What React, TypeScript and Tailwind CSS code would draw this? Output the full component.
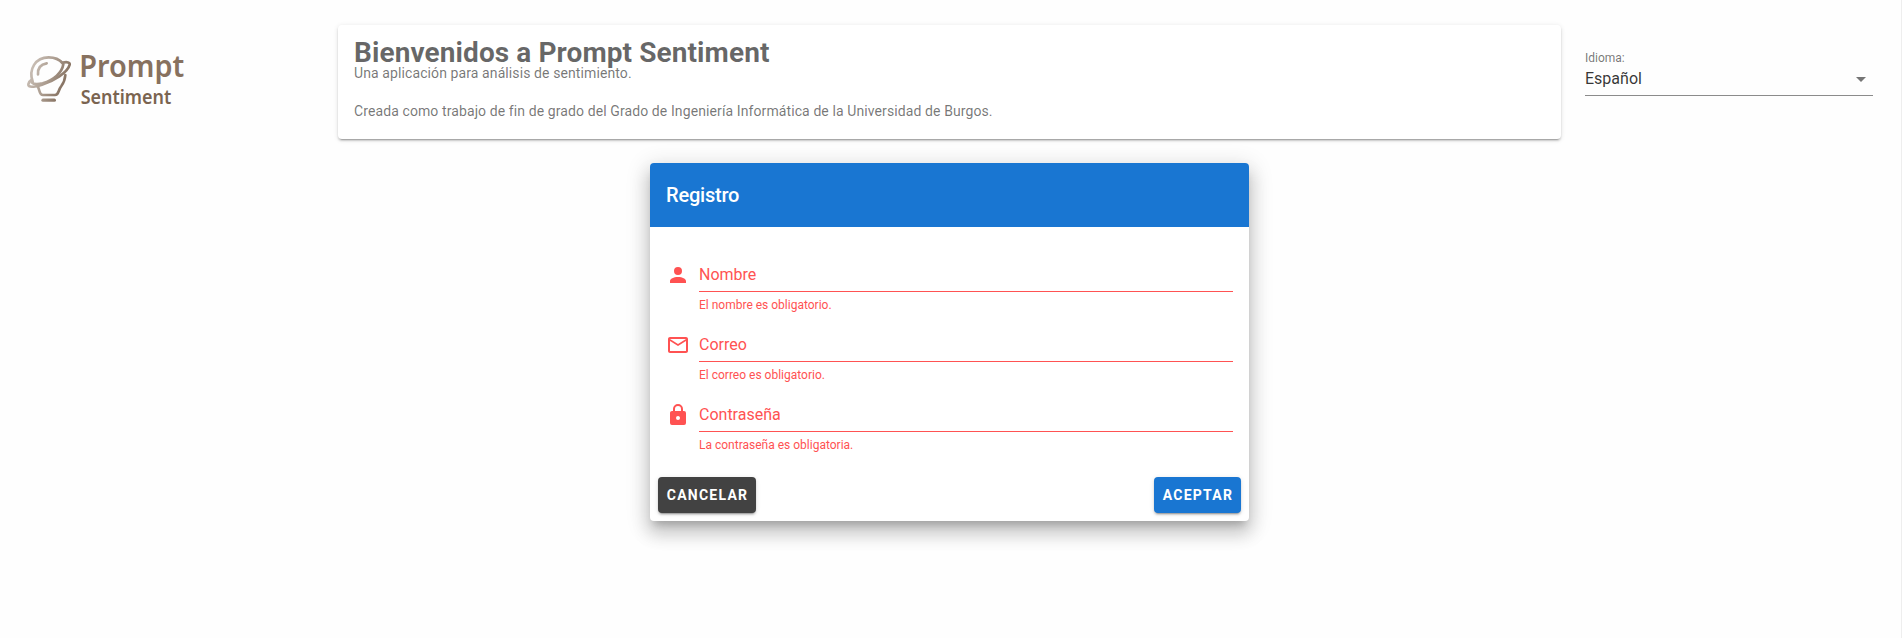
import React from "react";

const icons = {
  user: "M12,4A4,4 0 0,1 16,8A4,4 0 0,1 12,12A4,4 0 0,1 8,8A4,4 0 0,1 12,4M12,14C16.42,14 20,15.79 20,18V20H4V18C4,15.79 7.58,14 12,14Z",
  mail: "M22 6C22 4.9 21.1 4 20 4H4C2.9 4 2 4.9 2 6V18C2 19.1 2.9 20 4 20H20C21.1 20 22 19.1 22 18V6M20 6L12 11L4 6H20M20 18H4V8L12 13L20 8V18Z",
  lock: "M12,17A2,2 0 0,0 14,15C14,13.89 13.1,13 12,13A2,2 0 0,0 10,15A2,2 0 0,0 12,17M18,8A2,2 0 0,1 20,10V20A2,2 0 0,1 18,22H6A2,2 0 0,1 4,20V10C4,8.89 4.9,8 6,8H7V6A5,5 0 0,1 12,1A5,5 0 0,1 17,6V8H18M12,3A3,3 0 0,0 9,6V8H15V6A3,3 0 0,0 12,3Z",
};

function Logo() {
  return (
    <svg width="220" height="100" viewBox="0 0 660 300" role="img" aria-label="Prompt Sentiment">
      <defs>
        <linearGradient id="bulb" x1="85" y1="110" x2="210" y2="160" gradientUnits="userSpaceOnUse">
          <stop offset="0" stopColor="#cdc3ba" />
          <stop offset="0.5" stopColor="#ab9c8f" />
          <stop offset="1" stopColor="#7c6654" />
        </linearGradient>
      </defs>
      <g fill="none" stroke="url(#bulb)" strokeWidth="8" strokeLinecap="round" strokeLinejoin="round">
        <path d="M98 155C85 118 106 82 146 82C166 82 179 89 188 100" />
        <path d="M188 98C201 95 211 97 209 104C203 128 160 154 126 164C100 172 84 173 85 163C86 157 90 152 95 149" />
        <path d="M95 157C101 164 112 164 128 160C162 150 186 128 190 103" />
        <path d="M112 169C120 176 116 195 129 195H165C177 195 174 180 184 168C191 159 195 147 196 135" />
        <path d="M114 133C113 115 122 103 140 100" />
        <path d="M129 210.500H163" strokeWidth="10" />
      </g>
      <g fill="#87715f" className="font-['Noto_Sans',sans-serif]">
        <text x="238" y="138" fontSize="90" fontWeight="600" textLength="315" lengthAdjust="spacingAndGlyphs" transform="translate(0 2)">Prompt</text>
        <text x="242" y="221" fontSize="58" fontWeight="600" textLength="272" lengthAdjust="spacingAndGlyphs" fill="#7a6450">Sentiment</text>
      </g>
    </svg>
  );
}

function Field({ icon, label, error }: { icon: string; label: string; error: string }) {
  return (
    <div className="flex h-[70px] gap-[9px] pt-4 text-[#ff5252]">
      <svg className="mt-1 h-6 w-6 shrink-0" viewBox="0 0 24 24" fill="currentColor">
        <path d={icon} />
      </svg>
      <div className="min-w-0 flex-1">
        <label className="flex h-[33px] items-center border-b border-[#ff5252] text-base leading-5">{label}</label>
        <p className="pt-[7px] text-xs leading-3">{error}</p>
      </div>
    </div>
  );
}

const buttonStyle =
  "h-9 rounded pl-px text-sm font-bold tracking-[1.25px] text-white uppercase shadow-[0_3px_1px_-2px_rgba(0,0,0,.2),0_2px_2px_0_rgba(0,0,0,.14),0_1px_5px_0_rgba(0,0,0,.12)]";

export default function App() {
  return (
    <div className="h-[638px] w-full overflow-hidden border-r border-[#eeeeee] bg-[#fefefe] font-[Roboto,sans-serif]">
      <header className="flex h-[139px] items-start">
        <div className="w-[338px] shrink-0 pt-[30px]">
          <Logo />
        </div>
        <section className="mt-[25px] h-[114px] w-[1223px] shrink-0 rounded bg-white px-4 pt-[17px] shadow-[0_3px_1px_-2px_rgba(0,0,0,.2),0_2px_2px_0_rgba(0,0,0,.14),0_1px_5px_0_rgba(0,0,0,.12)]">
          <h1 className="text-[28px] leading-[22px] font-bold tracking-[0.09px] text-black/60">Bienvenidos a Prompt Sentiment</h1>
          <p className="text-sm leading-[19px] tracking-[0.1px] text-black/55">Una aplicación para análisis de sentimiento.</p>
          <p className="mt-[19px] text-sm leading-[19px] tracking-[0.1px] text-black/55">
            Creada como trabajo de fin de grado del Grado de Ingeniería Informática de la Universidad de Burgos.
          </p>
        </section>
        <div className="mt-[51px] ml-6 flex h-[45px] w-[288px] flex-col border-b border-black/45">
          <span className="text-xs leading-[14px] text-black/55">Idioma:</span>
          <div className="flex flex-1 items-center justify-between pb-[2px] text-base text-black/80">
            <span>Español</span>
            <svg className="h-6 w-6" viewBox="0 0 24 24" fill="#757575">
              <path d="M7,10L12,15L17,10H7Z" />
            </svg>
          </div>
        </div>
      </header>
      <main className="mt-6 ml-[650px] flex h-[358px] w-[599px] flex-col rounded bg-white shadow-[0_7px_8px_-4px_rgba(0,0,0,.2),0_12px_17px_2px_rgba(0,0,0,.14),0_5px_22px_4px_rgba(0,0,0,.12)]">
        <div className="flex h-16 items-center rounded-t bg-[#1976d2] px-4">
          <h2 className="text-xl font-medium tracking-[-0.2px] text-white">Registro</h2>
        </div>
        <form className="flex flex-1 flex-col">
          <div className="pt-4 pr-4 pl-4">
            <Field icon={icons.user} label="Nombre" error="El nombre es obligatorio." />
            <Field icon={icons.mail} label="Correo" error="El correo es obligatorio." />
            <Field icon={icons.lock} label="Contraseña" error="La contraseña es obligatoria." />
          </div>
          <div className="mt-auto flex justify-between p-2">
            <button type="button" className={"w-[98px] bg-[#424242] " + buttonStyle}>Cancelar</button>
            <button type="button" className={"w-[87px] bg-[#1976d2] " + buttonStyle}>Aceptar</button>
          </div>
        </form>
      </main>
    </div>
  );
}
